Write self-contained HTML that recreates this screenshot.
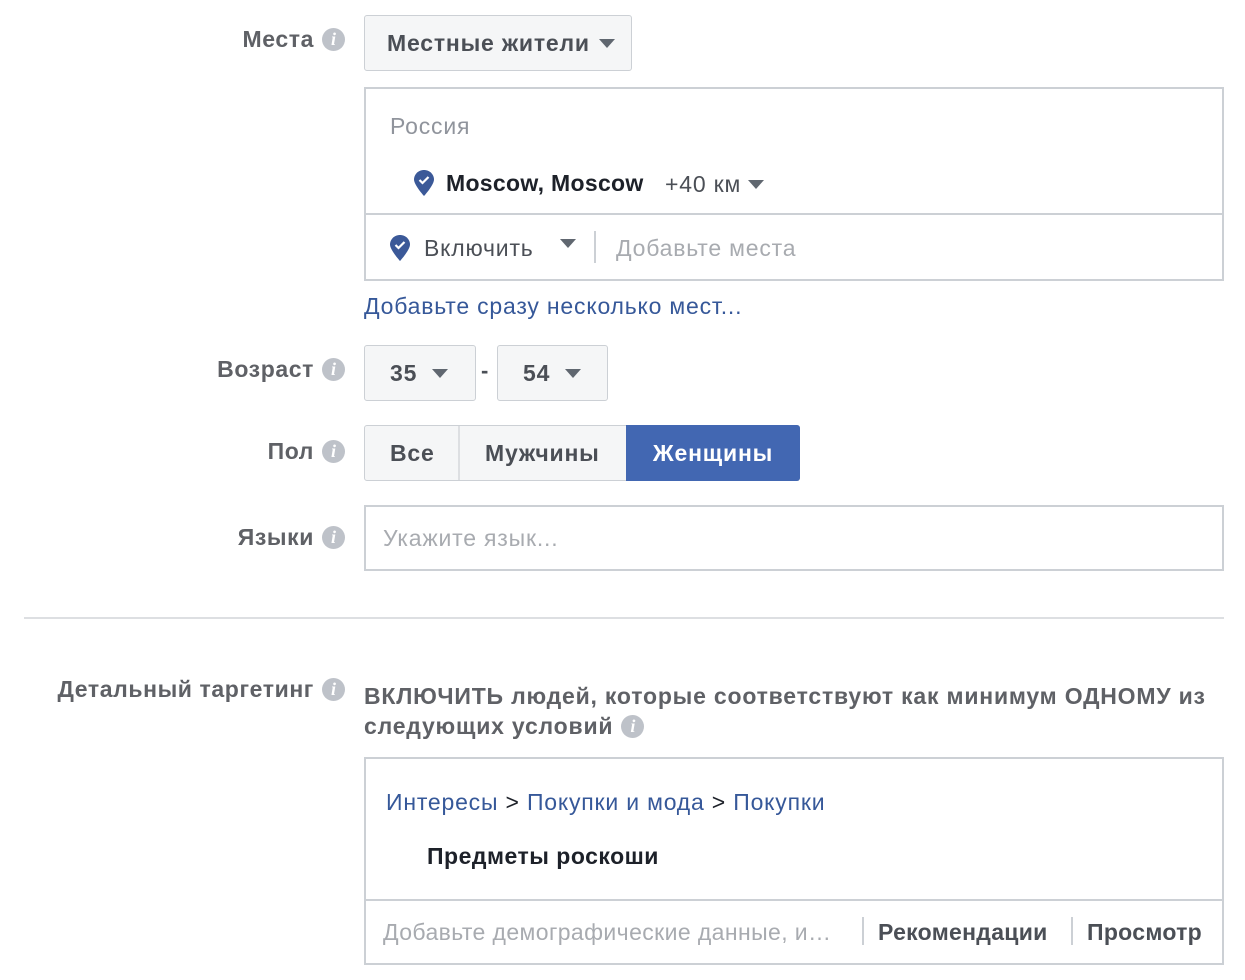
<!DOCTYPE html>
<html><head><meta charset="utf-8"><style>
body{margin:0;width:1245px;height:980px;background:#fff;font-family:"Liberation Sans",sans-serif;position:relative;overflow:hidden;letter-spacing:0.8px}
.a{position:absolute;white-space:nowrap}
.lbl{font-weight:bold;font-size:23px;color:#5f6166;text-align:right;letter-spacing:0.6px}
.i{display:inline-block;width:23px;height:23px;border-radius:50%;background:#bec2c9;color:#fff;font:italic bold 18px "Liberation Serif",serif;text-align:center;line-height:23px;vertical-align:2px;margin-left:8px;letter-spacing:0}
.btn{position:absolute;background:#f5f6f7;border:1px solid #ccd0d5;border-radius:3px;box-sizing:border-box;font-weight:bold;font-size:23px;color:#4b4f56}
.tri{display:inline-block;width:0;height:0;border-left:8px solid transparent;border-right:8px solid transparent;border-top:9px solid #606770;vertical-align:3px}
.box{position:absolute;border:2px solid #ccd0d5;box-sizing:border-box}
.blue{color:#365899}
.t{font-size:23px}
</style></head><body>
<div class="a lbl" style="right:900px;top:26px">Места<span class="i">i</span></div>
<div class="btn" style="left:364px;top:15px;width:268px;height:56px;padding:14px 0 0 22px">Местные жители <span class="tri" style="margin-left:2px"></span></div>

<div class="box" style="left:364px;top:87px;width:860px;height:194px"></div>
<div class="a" style="left:366px;top:213px;width:856px;height:2px;background:#ccd0d5"></div>
<div class="a t" style="left:390px;top:113px;color:#90949c">Россия</div>
<svg class="a" style="left:414px;top:170px" width="20" height="26" viewBox="0 0 20 26"><path d="M10 0C4.5 0 0 4.3 0 9.5 0 15 10 26 10 26S20 15 20 9.5C20 4.3 15.5 0 10 0z" fill="#3b5998"/><path d="M5.5 10l3 3 6-6" stroke="#fff" stroke-width="2.2" fill="none"/></svg>
<div class="a t" style="left:446px;top:170px;font-weight:bold;color:#1d2129;letter-spacing:0.3px">Moscow, Moscow</div>
<div class="a t" style="left:665px;top:171px;color:#4b4f56">+40 км <span class="tri"></span></div>
<svg class="a" style="left:390px;top:235px" width="20" height="26" viewBox="0 0 20 26"><path d="M10 0C4.5 0 0 4.3 0 9.5 0 15 10 26 10 26S20 15 20 9.5C20 4.3 15.5 0 10 0z" fill="#3b5998"/><path d="M5.5 10l3 3 6-6" stroke="#fff" stroke-width="2.2" fill="none"/></svg>
<div class="a t" style="left:424px;top:235px;color:#4b4f56">Включить</div>
<div class="a" style="left:560px;top:238px"><span class="tri"></span></div>
<div class="a" style="left:594px;top:231px;width:2px;height:32px;background:#ccd0d5"></div>
<div class="a t" style="left:616px;top:235px;color:#a8abb0">Добавьте места</div>
<div class="a blue t" style="left:364px;top:293px">Добавьте сразу несколько мест...</div>

<div class="a lbl" style="right:900px;top:356px">Возраст<span class="i">i</span></div>
<div class="btn" style="left:364px;top:345px;width:112px;height:56px;padding:14px 0 0 25px">35 <span class="tri" style="margin-left:8px"></span></div>
<div class="a" style="left:481px;top:358px;font-size:22px;font-weight:bold;color:#4b4f56">-</div>
<div class="btn" style="left:497px;top:345px;width:111px;height:56px;padding:14px 0 0 25px">54 <span class="tri" style="margin-left:8px"></span></div>

<div class="a lbl" style="right:900px;top:438px">Пол<span class="i">i</span></div>
<div class="btn" style="left:364px;top:425px;width:436px;height:56px"></div>
<div class="a" style="left:458px;top:426px;width:2px;height:54px;background:#dddfe2"></div>
<div class="a t" style="left:390px;top:440px;font-weight:bold;color:#4b4f56">Все</div>
<div class="a t" style="left:485px;top:440px;font-weight:bold;color:#4b4f56">Мужчины</div>
<div class="a" style="left:626px;top:425px;width:174px;height:56px;background:#4267b2;border-radius:0 3px 3px 0;color:#fff;font-size:23px;font-weight:bold;text-align:center;line-height:56px">Женщины</div>

<div class="a lbl" style="right:900px;top:524px">Языки<span class="i">i</span></div>
<div class="box" style="left:364px;top:505px;width:860px;height:66px"></div>
<div class="a t" style="left:383px;top:525px;color:#a8abb0">Укажите язык...</div>

<div class="a" style="left:24px;top:617px;width:1200px;height:2px;background:#dddfe2"></div>

<div class="a lbl" style="right:900px;top:676px">Детальный таргетинг<span class="i">i</span></div>
<div class="a" style="left:364px;top:681px;font-size:23px;font-weight:bold;color:#5f6166;line-height:30px;letter-spacing:0.8px">ВКЛЮЧИТЬ людей, которые соответствуют как минимум ОДНОМУ из<br>следующих условий<span class="i">i</span></div>
<div class="box" style="left:364px;top:757px;width:860px;height:208px"></div>
<div class="a" style="left:366px;top:899px;width:856px;height:2px;background:#ccd0d5"></div>
<div class="a t" style="left:386px;top:789px;color:#1d2129"><span class="blue">Интересы</span> &gt; <span class="blue">Покупки и мода</span> &gt; <span class="blue">Покупки</span></div>
<div class="a t" style="left:427px;top:843px;font-weight:bold;color:#1d2129;letter-spacing:0.5px">Предметы роскоши</div>
<div class="a t" style="left:383px;top:919px;color:#a8abb0;letter-spacing:0.4px">Добавьте демографические данные, и…</div>
<div class="a" style="left:862px;top:917px;width:2px;height:28px;background:#ccd0d5"></div>
<div class="a t" style="left:878px;top:919px;font-weight:bold;color:#4b4f56;letter-spacing:0.3px">Рекомендации</div>
<div class="a" style="left:1071px;top:917px;width:2px;height:28px;background:#ccd0d5"></div>
<div class="a t" style="left:1087px;top:919px;font-weight:bold;color:#4b4f56;letter-spacing:0.3px">Просмотр</div>
</body></html>
